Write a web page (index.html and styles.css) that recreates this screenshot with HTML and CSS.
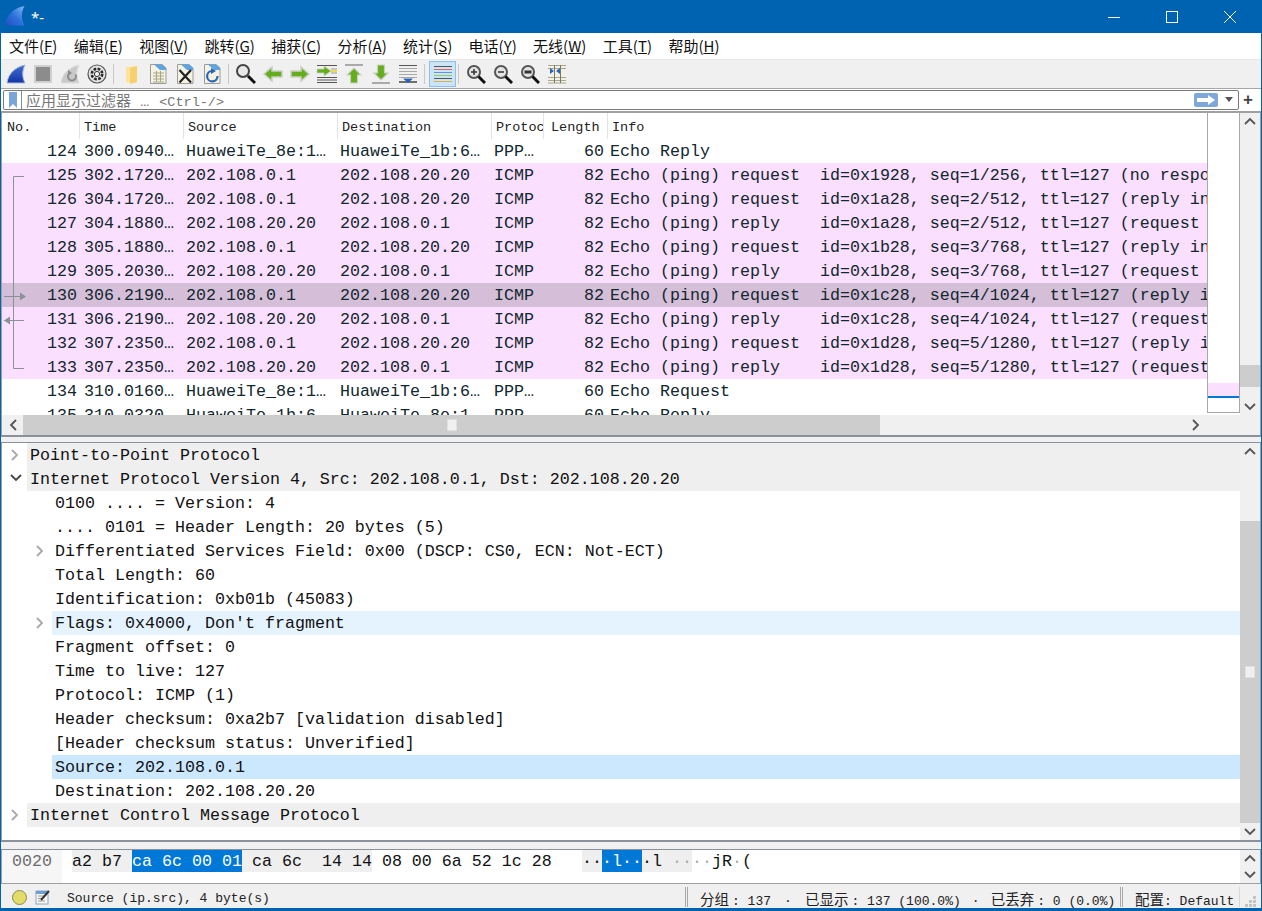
FILE: index.html
```html
<!DOCTYPE html>
<html lang="zh">
  <head>
    <meta charset="utf-8">
    <title>*-</title>
    <link rel="stylesheet" href="styles.css">
  </head>
  <body>
    <div class="window">
      <div class="titlebar">
        <svg class="logo" width="20" height="20" viewBox="0 0 20 20"><defs><linearGradient id="fin" x1="1" y1="0" x2="0" y2="1"><stop offset="0" stop-color="#7fb8f2"/><stop offset=".5" stop-color="#2f72dc"/><stop offset="1" stop-color="#1c4fc0"/></linearGradient></defs><path d="M0 19.500C1 10 8 2 19.500 0C16 6 16 13 19.500 19.500Z" fill="url(#fin)"/></svg>
        <span class="title">*-</span>
        <div class="winbtns">
          <div class="winbtn"><svg width="14" height="14" viewBox="0 0 14 14"><path d="M1 7.500H13" stroke="#fff"/></svg></div>
          <div class="winbtn"><svg width="14" height="14" viewBox="0 0 14 14"><rect x="1.500" y="1.500" width="11" height="11" fill="none" stroke="#fff"/></svg></div>
          <div class="winbtn"><svg width="14" height="14" viewBox="0 0 14 14"><path d="M1 1L13 13M13 1L1 13" stroke="#fff"/></svg></div>
        </div>
      </div>

      <div class="menubar">
        <span>文件(<u>F</u>)</span><span>编辑(<u>E</u>)</span><span>视图(<u>V</u>)</span><span>跳转(<u>G</u>)</span><span>捕获(<u>C</u>)</span><span>分析(<u>A</u>)</span><span>统计(<u>S</u>)</span><span>电话(<u>Y</u>)</span><span>无线(<u>W</u>)</span><span>工具(<u>T</u>)</span><span>帮助(<u>H</u>)</span>
      </div>

      <div class="toolbar">
        <div class="tool"><svg width="22" height="22" viewBox="0 0 22 22"><defs><linearGradient id="fin2" x1="0" y1="0" x2="0" y2="1"><stop offset="0" stop-color="#3f6fd0"/><stop offset="1" stop-color="#1435a8"/></linearGradient></defs><path d="M2 20C3 11 10 4 20 2C17 8 17 14 20 20Z" fill="url(#fin2)" stroke="#a9b9d9"/></svg></div>
        <div class="tool"><svg width="20" height="20" viewBox="0 0 20 20"><rect x="2" y="2" width="16" height="16" fill="#8c8c8c" stroke="#d0d0d0" stroke-width="2"/></svg></div>
        <div class="tool"><svg width="22" height="22" viewBox="0 0 22 22"><path d="M2 20C3 11 10 4 20 2C17 8 17 14 20 20Z" fill="#c9c9c9" stroke="#dedede"/><path d="M16.500 11.500A4 4 0 1 1 11 10" fill="none" stroke="#8d8d8d" stroke-width="2"/><path d="M9 7L13 10L9 13Z" fill="#8d8d8d"/></svg></div>
        <div class="tool"><svg width="20" height="20" viewBox="0 0 20 20"><circle cx="10" cy="10" r="9" fill="#e4e4e4" stroke="#555" stroke-width="1.200"/><circle cx="10" cy="10" r="5.200" fill="none" stroke="#2b2b2b" stroke-width="2.600" stroke-dasharray="2.700 1.380"/><circle cx="10" cy="10" r="2.600" fill="#f2f2f2" stroke="#333"/></svg></div>
        <div class="sep"></div>
        <div class="tool"><svg width="20" height="22" viewBox="0 0 20 22"><path d="M5 4L16 3V19L10 20L5 19Z" fill="#fde39c"/><path d="M9 5L16 3V19L9 21Z" fill="#f7cf6e"/></svg></div>
        <div class="tool"><svg width="20" height="22" viewBox="0 0 20 22"><path d="M2.500 1.500H14L18 5V20.500H2.500Z" fill="#f4f2e0" stroke="#9c9c9c"/><path d="M6 1.500H14L18 5V7H12Z" fill="#5da5e2"/><path d="M5 10H16M5 13H16M5 16H16M5 19H16M8.500 8V19M12.500 8V19" stroke="#a8a58e"/></svg></div>
        <div class="tool"><svg width="20" height="22" viewBox="0 0 20 22"><path d="M2.500 1.500H14L18 5V20.500H2.500Z" fill="#f4f2e0" stroke="#9c9c9c"/><path d="M6 1.500H14L18 5V7H12Z" fill="#5da5e2"/><path d="M4.500 7L16 19.500M16 7L4.500 19.500" stroke="#222" stroke-width="2.200"/></svg></div>
        <div class="tool"><svg width="20" height="22" viewBox="0 0 20 22"><path d="M2.500 1.500H14L18 5V20.500H2.500Z" fill="#f4f2e0" stroke="#9c9c9c"/><path d="M6 1.500H14L18 5V7H12Z" fill="#5da5e2"/><path d="M15.500 13A5.200 5.200 0 1 1 10 8" fill="none" stroke="#2a63b8" stroke-width="2.200"/><path d="M9 5L14 8L9 11Z" fill="#2a63b8"/></svg></div>
        <div class="sep"></div>
        <div class="tool"><svg width="22" height="22" viewBox="0 0 22 22"><circle cx="8" cy="8" r="6" fill="#e8e8e8" stroke="#444" stroke-width="2"/><path d="M13 13L20 20" stroke="#111" stroke-width="3"/></svg></div>
        <div class="tool"><svg width="22" height="18" viewBox="0 0 22 18"><path d="M2 9L10 2V6H20V12H10V16Z" fill="#64ae1e" stroke="#cbcfc2" stroke-width="1.500"/></svg></div>
        <div class="tool"><svg width="22" height="18" viewBox="0 0 22 18"><path d="M20 9L12 2V6H2V12H12V16Z" fill="#64ae1e" stroke="#cbcfc2" stroke-width="1.500"/></svg></div>
        <div class="tool"><svg width="22" height="20" viewBox="0 0 22 20"><path d="M1 1.500H21M1 13.500H21M1 16H21M1 18.500H21" stroke="#555" stroke-width="1.200"/><path d="M15 5H21M15 9H21" stroke="#999" stroke-width="1.200"/><path d="M15 6H21V8H15Z" fill="#f3d84a"/><path d="M1 5H8V2L15 7L8 12V9H1Z" fill="#64ae1e" stroke="#cbcfc2" stroke-width=".8"/></svg></div>
        <div class="tool"><svg width="20" height="22" viewBox="0 0 20 22"><path d="M1 2H19" stroke="#aaa" stroke-width="2"/><path d="M10 5L17 12H13.500V20H6.500V12H3Z" fill="#64ae1e" stroke="#cbcfc2" stroke-width="1.200"/></svg></div>
        <div class="tool"><svg width="20" height="22" viewBox="0 0 20 22"><path d="M1 20H19" stroke="#aaa" stroke-width="2"/><path d="M10 17L17 10H13.500V2H6.500V10H3Z" fill="#64ae1e" stroke="#cbcfc2" stroke-width="1.200"/></svg></div>
        <div class="tool"><svg width="20" height="20" viewBox="0 0 20 20"><path d="M1 1.500H19" stroke="#555"/><path d="M1 4.500H19M1 7.500H19M1 10.500H19M1 13.500H19" stroke="#a8a8a8"/><path d="M1 18H19" stroke="#444" stroke-width="1.500"/><path d="M5 14.500H15L10 19Z" fill="#2a63b8"/></svg></div>
        <div class="sep"></div>
        <div class="tool on"><svg width="18" height="20" viewBox="0 0 18 20"><path d="M0 2.500H18" stroke="#555"/><path d="M0 5.500H18" stroke="#e0675a"/><path d="M0 8.500H18" stroke="#6a8fd8"/><path d="M0 11.500H18" stroke="#8fcf5a"/><path d="M0 14.500H18" stroke="#555"/><path d="M0 17.500H18" stroke="#e0b040"/></svg></div>
        <div class="sep"></div>
        <div class="tool"><svg width="20" height="20" viewBox="0 0 20 20"><circle cx="8" cy="8" r="6" fill="#e4e4e4" stroke="#555" stroke-width="2"/><path d="M5 8H11M8 5V11" stroke="#333" stroke-width="1.500"/><path d="M12.500 12.500L19 19" stroke="#111" stroke-width="3"/></svg></div>
        <div class="tool"><svg width="20" height="20" viewBox="0 0 20 20"><circle cx="8" cy="8" r="6" fill="#e4e4e4" stroke="#555" stroke-width="2"/><path d="M5 8H11" stroke="#333" stroke-width="1.500"/><path d="M12.500 12.500L19 19" stroke="#111" stroke-width="3"/></svg></div>
        <div class="tool"><svg width="20" height="20" viewBox="0 0 20 20"><circle cx="8" cy="8" r="6" fill="#e4e4e4" stroke="#555" stroke-width="2"/><path d="M4.500 8H11.500" stroke="#333" stroke-width="3"/><path d="M12.500 12.500L19 19" stroke="#111" stroke-width="3"/></svg></div>
        <div class="tool"><svg width="20" height="20" viewBox="0 0 20 20"><rect x="1" y="1" width="18" height="18" fill="#f3f2e6"/><path d="M1 1.500H19M1 4.500H19M1 13.500H19M1 16.500H19M1 19H19" stroke="#a8a58e"/><path d="M7.500 1V19M13.500 1V19" stroke="#77776a"/><path d="M3 4L7 7L3 10ZM9 7L13 4V10Z" fill="#2a63b8"/></svg></div>
      </div>

      <div class="filterbar">
        <div class="filterbox">
          <div class="bookmark"><svg width="10" height="16" viewBox="0 0 10 16"><path d="M1 0H9V16L5 12L1 16Z" fill="#7ba4d9"/></svg></div>
          <span class="placeholder"><span class="hint-cjk">应用显示过滤器</span> <span class="hint-dots">…</span> &lt;Ctrl-/&gt;</span>
          <div class="applybtn"><svg width="18" height="10" viewBox="0 0 18 10"><path d="M0 3H11V0L18 5L11 10V7H0Z" fill="#fff"/></svg></div>
          <div class="dropbtn"></div>
        </div>
        <div class="plusbtn">+</div>
      </div>

      <div class="pane packets">
        <div class="pane-main">
          <div class="list">
            <div class="listhead">
              <span>No.</span><span>Time</span><span>Source</span><span>Destination</span><span>Protoc</span><span class="len">Length</span><span>Info</span>
            </div>
            <div class="row"><span class="r">124</span><span>300.0940…</span><span>HuaweiTe_8e:1…</span><span>HuaweiTe_1b:6…</span><span>PPP…</span><span class="r">60</span><span>Echo Reply</span></div>
            <div class="row icmp"><span class="r">125</span><span>302.1720…</span><span>202.108.0.1</span><span>202.108.20.20</span><span>ICMP</span><span class="r">82</span><span>Echo (ping) request  id=0x1928, seq=1/256, ttl=127 (no response found!)</span></div>
            <div class="row icmp"><span class="r">126</span><span>304.1720…</span><span>202.108.0.1</span><span>202.108.20.20</span><span>ICMP</span><span class="r">82</span><span>Echo (ping) request  id=0x1a28, seq=2/512, ttl=127 (reply in 127)</span></div>
            <div class="row icmp"><span class="r">127</span><span>304.1880…</span><span>202.108.20.20</span><span>202.108.0.1</span><span>ICMP</span><span class="r">82</span><span>Echo (ping) reply    id=0x1a28, seq=2/512, ttl=127 (request in 126)</span></div>
            <div class="row icmp"><span class="r">128</span><span>305.1880…</span><span>202.108.0.1</span><span>202.108.20.20</span><span>ICMP</span><span class="r">82</span><span>Echo (ping) request  id=0x1b28, seq=3/768, ttl=127 (reply in 129)</span></div>
            <div class="row icmp"><span class="r">129</span><span>305.2030…</span><span>202.108.20.20</span><span>202.108.0.1</span><span>ICMP</span><span class="r">82</span><span>Echo (ping) reply    id=0x1b28, seq=3/768, ttl=127 (request in 128)</span></div>
            <div class="row icmp sel"><span class="r">130</span><span>306.2190…</span><span>202.108.0.1</span><span>202.108.20.20</span><span>ICMP</span><span class="r">82</span><span>Echo (ping) request  id=0x1c28, seq=4/1024, ttl=127 (reply in 131)</span></div>
            <div class="row icmp"><span class="r">131</span><span>306.2190…</span><span>202.108.20.20</span><span>202.108.0.1</span><span>ICMP</span><span class="r">82</span><span>Echo (ping) reply    id=0x1c28, seq=4/1024, ttl=127 (request in 130)</span></div>
            <div class="row icmp"><span class="r">132</span><span>307.2350…</span><span>202.108.0.1</span><span>202.108.20.20</span><span>ICMP</span><span class="r">82</span><span>Echo (ping) request  id=0x1d28, seq=5/1280, ttl=127 (reply in 133)</span></div>
            <div class="row icmp"><span class="r">133</span><span>307.2350…</span><span>202.108.20.20</span><span>202.108.0.1</span><span>ICMP</span><span class="r">82</span><span>Echo (ping) reply    id=0x1d28, seq=5/1280, ttl=127 (request in 132)</span></div>
            <div class="row"><span class="r">134</span><span>310.0160…</span><span>HuaweiTe_8e:1…</span><span>HuaweiTe_1b:6…</span><span>PPP…</span><span class="r">60</span><span>Echo Request</span></div>
            <div class="row"><span class="r">135</span><span>310.0320…</span><span>HuaweiTe_1b:6…</span><span>HuaweiTe_8e:1…</span><span>PPP…</span><span class="r">60</span><span>Echo Reply</span></div>
            <svg class="related" width="30" height="216" viewBox="0 0 30 216"><g fill="none" stroke="#8a9296"><path d="M22 1.500H11.500V193.500H22"/><path d="M2 121.500H19M2 145.500H22"/></g><path d="M18 117.500L24 121.500L18 125.500ZM2 145.500L8 141.500V149.500Z" fill="#8a9296"/></svg>
          </div>
          <div class="minimap">
            <div class="map-spacer"></div>
            <div class="map-pink"></div>
            <div class="map-line"></div>
          </div>
          <div class="vscroll">
            <div class="arrow">
              <svg width="12" height="8" viewBox="0 0 12 8"><path d="M1 7L6 2L11 7" fill="none" stroke="#555" stroke-width="1.800"/></svg>
            </div>
            <div class="track"><div class="thumb packets-thumb"></div></div>
            <div class="arrow">
              <svg width="12" height="8" viewBox="0 0 12 8"><path d="M1 1L6 6L11 1" fill="none" stroke="#555" stroke-width="1.800"/></svg>
            </div>
          </div>
        </div>
        <div class="hscroll">
          <div class="arrow"><svg width="8" height="12" viewBox="0 0 8 12"><path d="M7 1L2 6L7 11" fill="none" stroke="#555" stroke-width="1.800"/></svg></div>
          <div class="hthumb"><span class="grip"></span></div>
          <div class="htrack"></div>
          <div class="arrow"><svg width="8" height="12" viewBox="0 0 8 12"><path d="M1 1L6 6L1 11" fill="none" stroke="#555" stroke-width="1.800"/></svg></div>
          <div class="hrest"></div>
        </div>
      </div>

      <div class="splitter"></div>

      <div class="pane details">
        <div class="tree">
          <div class="node head"><svg class="tw" width="10" height="12" viewBox="0 0 10 12"><path d="M2 1L7 6L2 11" fill="none" stroke="#a8a8a8" stroke-width="1.800"/></svg><span>Point-to-Point Protocol</span></div>
          <div class="node head"><svg class="tw" width="12" height="10" viewBox="0 0 12 10"><path d="M1 2L6 7L11 2" fill="none" stroke="#444" stroke-width="1.800"/></svg><span>Internet Protocol Version 4, Src: 202.108.0.1, Dst: 202.108.20.20</span></div>
          <div class="node sub"><span>0100 .... = Version: 4</span></div>
          <div class="node sub"><span>.... 0101 = Header Length: 20 bytes (5)</span></div>
          <div class="node sub"><svg class="tw" width="10" height="12" viewBox="0 0 10 12"><path d="M2 1L7 6L2 11" fill="none" stroke="#a8a8a8" stroke-width="1.800"/></svg><span>Differentiated Services Field: 0x00 (DSCP: CS0, ECN: Not-ECT)</span></div>
          <div class="node sub"><span>Total Length: 60</span></div>
          <div class="node sub"><span>Identification: 0xb01b (45083)</span></div>
          <div class="node sub hover"><svg class="tw" width="10" height="12" viewBox="0 0 10 12"><path d="M2 1L7 6L2 11" fill="none" stroke="#a8a8a8" stroke-width="1.800"/></svg><span>Flags: 0x4000, Don't fragment</span></div>
          <div class="node sub"><span>Fragment offset: 0</span></div>
          <div class="node sub"><span>Time to live: 127</span></div>
          <div class="node sub"><span>Protocol: ICMP (1)</span></div>
          <div class="node sub"><span>Header checksum: 0xa2b7 [validation disabled]</span></div>
          <div class="node sub"><span>[Header checksum status: Unverified]</span></div>
          <div class="node sub picked"><span>Source: 202.108.0.1</span></div>
          <div class="node sub"><span>Destination: 202.108.20.20</span></div>
          <div class="node head"><svg class="tw" width="10" height="12" viewBox="0 0 10 12"><path d="M2 1L7 6L2 11" fill="none" stroke="#a8a8a8" stroke-width="1.800"/></svg><span>Internet Control Message Protocol</span></div>
        </div>
        <div class="vscroll">
          <div class="arrow">
            <svg width="12" height="8" viewBox="0 0 12 8"><path d="M1 7L6 2L11 7" fill="none" stroke="#555" stroke-width="1.800"/></svg>
          </div>
          <div class="track"><div class="thumb details-thumb"><span class="grip"></span></div></div>
          <div class="arrow">
            <svg width="12" height="8" viewBox="0 0 12 8"><path d="M1 1L6 6L11 1" fill="none" stroke="#555" stroke-width="1.800"/></svg>
          </div>
        </div>
      </div>

      <div class="splitter wide"></div>

      <div class="pane bytes">
        <div class="hexpane">
          <div class="offset">0020</div>
          <div class="hexline"><span class="field">a2 b7 <span class="pick">ca 6c 00 01</span> ca 6c  14 14</span> 08 00 6a 52 1c 28</div>
          <div class="asciiline"><span class="field">··<span class="pick">·l··</span>·l <span class="dim">··</span></span><span class="dim">··</span>jR<span class="dim">·</span>(</div>
        </div>
        <div class="vscroll">
          <div class="arrow">
            <svg width="12" height="8" viewBox="0 0 12 8"><path d="M1 7L6 2L11 7" fill="none" stroke="#555" stroke-width="1.800"/></svg>
          </div>
          <div class="arrow">
            <svg width="12" height="8" viewBox="0 0 12 8"><path d="M1 1L6 6L11 1" fill="none" stroke="#555" stroke-width="1.800"/></svg>
          </div>
        </div>
      </div>

      <div class="statusbar">
        <span class="led"></span>
        <svg class="note" width="16" height="16" viewBox="0 0 16 16"><rect x="1" y="2" width="12" height="13" fill="#f8f8f0" stroke="#8aa8c8"/><path d="M1 2H13V5H1Z" fill="#6f9fd0"/><path d="M3 7H9M3 9.500H8M3 12H10" stroke="#999"/><path d="M6 11L14 2" stroke="#333" stroke-width="2"/></svg>
        <span class="status-msg">Source (ip.src), 4 byte(s)</span>
        <div class="status-sep"></div>
        <span class="status-stats"><span class="cjk wide-colon">分组</span>: 137<span class="dot first">·</span><span class="cjk wide-colon">已显示</span>: 137 (100.0%)<span class="dot">·</span><span class="cjk wide-colon">已丢弃</span>: 0 (0.0%)</span>
        <div class="status-sep"></div>
        <span class="status-profile"><span class="cjk">配置</span>: Default</span>
        <div class="status-end"></div>
        <svg class="sizegrip" width="11" height="11" viewBox="0 0 11 11"><path d="M8 0h3v3H8zM4 4h3v3H4zM8 4h3v3H8zM0 8h3v3H0zM4 8h3v3H4zM8 8h3v3H8z" fill="#c4c4c4"/></svg>
      </div>
    </div>
  </body>
</html>
```

FILE: styles.css
```css
html, body {
    margin: 0;
    height: 100%;
    overflow: hidden;
    background-color: #f0f0f0;
}
.window {
    box-sizing: border-box;
    width: 1262px;
    height: 911px;
    display: flex;
    flex-direction: column;
    border-left: 1px solid #0063b1;
    border-right: 1px solid #0063b1;
    border-bottom: 3px solid #0063b1;
    font-family: "Liberation Mono", "Noto Sans CJK SC", monospace;
    color: #111;
}
.titlebar {
    height: 33px;
    display: flex;
    align-items: center;
    background-color: #0063b1;
    color: #fff;
}
.logo {
    margin-left: 4px;
    margin-top: -2px;
}
.title {
    margin-left: 6px;
    font: 15px "Noto Sans", sans-serif;
}
.winbtns {
    margin-left: auto;
    margin-right: 2px;
    display: flex;
}
.winbtn {
    width: 58px;
    height: 33px;
    display: flex;
    justify-content: center;
    align-items: center;
}
.menubar {
    height: 26px;
    display: flex;
    align-items: center;
    gap: 16.400px;
    padding-left: 8px;
    background-color: #fff;
    font: 15px "Noto Sans CJK SC", sans-serif;
    color: #111;
}
.toolbar {
    height: 30px;
    box-sizing: border-box;
    display: flex;
    align-items: center;
    padding-left: 1px;
    background-color: #f0f0f0;
    border-top: 1px solid #e8e8e8;
    border-bottom: 1px solid #a6a6a6;
}
.tool {
    width: 27px;
    height: 26px;
    box-sizing: border-box;
    display: flex;
    justify-content: center;
    align-items: center;
}
.tool.on {
    margin: 0 -1px 0 1px;
    background-color: #cce4f7;
    border: 1px solid #8cc0ea;
}
.sep {
    width: 1px;
    height: 20px;
    margin: 0 3px;
    background-color: #c8c8c8;
}
.filterbar {
    height: 24px;
    box-sizing: border-box;
    display: flex;
    align-items: center;
    background-color: #fff;
    border-bottom: 2px solid #a0a0a0;
}
.filterbox {
    box-sizing: border-box;
    width: 1236px;
    height: 20px;
    margin-left: 2px;
    display: flex;
    align-items: center;
    border: 1px solid #7a7a7a;
    border-radius: 2px;
}
.bookmark {
    width: 17px;
    height: 18px;
    box-sizing: content-box;
    display: flex;
    justify-content: center;
    align-items: center;
    border-right: 1px solid #8a8a8a;
}
.placeholder {
    margin-left: 4px;
    white-space: pre;
    font-size: 13.500px;
    color: #767676;
}
.hint-cjk {
    font: 15px "Noto Sans CJK SC", sans-serif;
}
.hint-dots {
    margin: 0 2px 0 1px;
    font-size: 15px;
}
.applybtn {
    width: 24px;
    height: 14px;
    margin-left: auto;
    display: flex;
    justify-content: center;
    align-items: center;
    background-color: #7fa8d8;
    border-radius: 2px;
}
.dropbtn {
    width: 0;
    height: 0;
    margin: 0 5px 0 7px;
    border-left: 4px solid transparent;
    border-right: 4px solid transparent;
    border-top: 5px solid #555;
}
.plusbtn {
    flex: 1;
    padding-right: 4px;
    text-align: center;
    font: bold 17px "Liberation Sans", sans-serif;
    color: #444;
}
.pane {
    background-color: #fff;
    border-left: 1px solid #a0a0a0;
    border-right: 1px solid #a0a0a0;
}
.packets {
    height: 322px;
    display: flex;
    flex-direction: column;
}
.pane-main {
    height: 302px;
    display: flex;
}
.list {
    position: relative;
    width: 1205px;
    overflow: hidden;
}
.listhead,
.row {
    display: grid;
    grid-template-columns: 77px 104px 154px 154px 52px 64px 1fr;
    white-space: pre;
}
.listhead {
    height: 26px;
    align-items: center;
    font-size: 13.500px;
    color: #222;
}
.listhead span {
    height: 26px;
    line-height: 29px;
    padding-left: 4px;
    overflow: hidden;
    border-left: 1px solid #e4e4e4;
    box-sizing: border-box;
}
.listhead span:first-child {
    padding-left: 5px;
    border-left: none;
}
.listhead .len {
    padding-left: 7px;
}
.row {
    height: 24px;
    line-height: 24px;
    font-size: 16.670px;
    color: #12272e;
}
.row span {
    box-sizing: border-box;
    padding-top: 1px;
    padding-left: 3px;
    overflow: hidden;
}
.row span:nth-child(2) {
    padding-left: 5px;
}
.row .r {
    padding-right: 3px;
    text-align: right;
}
.row span:first-child {
    padding-right: 2px;
}
.icmp {
    background-color: #fbdfff;
}
.sel {
    background-color: #d5bfd8;
}
.related {
    position: absolute;
    left: 0;
    top: 62px;
}
.minimap {
    width: 33px;
    height: 300px;
    box-sizing: border-box;
    border-left: 1px solid #a8a8a8;
    border-right: 1px solid #a8a8a8;
    border-bottom: 1px solid #a8a8a8;
    display: flex;
    flex-direction: column;
}
.map-spacer {
    height: 270px;
}
.map-pink {
    height: 13px;
    background-color: #fbdfff;
}
.map-line {
    height: 2px;
    background-color: #0078d7;
}
.vscroll {
    width: 20px;
    display: flex;
    flex-direction: column;
    justify-content: space-between;
    background-color: #f0f0f0;
}
.arrow {
    flex: none;
    width: 20px;
    height: 16px;
    display: flex;
    justify-content: center;
    align-items: center;
}
.track {
    flex: 1;
    position: relative;
}
.thumb {
    position: absolute;
    left: 0;
    width: 100%;
    background-color: #cdcdcd;
}
.packets-thumb {
    top: 236px;
    height: 22px;
}
.details-thumb {
    top: 62px;
    height: 302px;
    display: flex;
    justify-content: center;
    align-items: center;
}
.grip {
    width: 10px;
    height: 12px;
    background-color: #f0f0f0;
    border: 1px solid #e0e0e0;
    box-sizing: border-box;
}
.hscroll {
    height: 20px;
    display: flex;
    background-color: #f0f0f0;
}
.hscroll .arrow {
    height: 20px;
    width: 21px;
}
.hthumb {
    width: 857px;
    display: flex;
    justify-content: center;
    align-items: center;
    background-color: #cdcdcd;
}
.htrack {
    width: 305px;
}
.hrest {
    flex: 1;
}
.splitter {
    height: 8px;
    box-sizing: border-box;
    background-color: #f0f0f0;
    border-top: 2px solid #8a919a;
    border-bottom: 1px solid #8a919a;
}
.splitter.wide {
    height: 10px;
}
.details {
    height: 398px;
    display: flex;
}
.tree {
    width: 1238px;
}
.node {
    position: relative;
    height: 24px;
    line-height: 24px;
    white-space: pre;
    font-size: 16.670px;
    color: #111;
}
.node span {
    display: block;
    box-sizing: border-box;
    height: 24px;
    padding-top: 1px;
}
.head {
    margin-left: 25px;
    padding-left: 3px;
    background-color: #efefef;
}
.sub {
    margin-left: 50px;
    padding-left: 3px;
}
.hover {
    background-color: #e5f3ff;
}
.picked {
    background-color: #cce8ff;
}
.tw {
    position: absolute;
    top: 6px;
    left: -17px;
}
.bytes {
    height: 33px;
    display: flex;
}
.bytes .vscroll .arrow {
    height: 16px;
}
.hexpane {
    width: 1238px;
    display: flex;
    font-size: 16.670px;
    white-space: pre;
    line-height: 24px;
}
.offset {
    width: 60px;
    padding-left: 10px;
    box-sizing: border-box;
    background-color: #f6f6f6;
    color: #6d6d6d;
}
.hexline {
    margin-left: 10px;
    width: 480px;
    height: 22px;
}
.asciiline {
    margin-left: 30px;
    height: 22px;
}
.field {
    display: inline-block;
    height: 22px;
    vertical-align: top;
    background-color: #efefef;
}
.pick {
    display: inline-block;
    height: 22px;
    vertical-align: top;
    background-color: #0078d7;
    color: #fff;
}
.dim {
    color: #aaa;
}
.statusbar {
    height: 25px;
    box-sizing: border-box;
    display: flex;
    align-items: center;
    padding-top: 2px;
    background-color: #f0f0f0;
    border-top: 1px solid #a0a0a0;
    font-size: 13px;
    color: #222;
    white-space: pre;
}
.led {
    width: 13px;
    height: 13px;
    margin-left: 11px;
    border-radius: 50%;
    background-color: #e4dc68;
    border: 1px solid #8a8a50;
}
.note {
    margin-left: 8px;
}
.status-msg {
    margin-left: 16px;
    width: 618px;
    padding-top: 2px;
}
.status-sep {
    width: 3px;
    height: 20px;
    box-sizing: border-box;
    border-left: 1px solid #a8a8a8;
    border-right: 1px solid #a8a8a8;
}
.status-stats {
    margin-left: 12px;
    width: 420px;
    padding-top: 2px;
}
.dot {
    display: inline-block;
    width: 30px;
    text-align: center;
}
.dot.first {
    width: 34px;
}
.status-profile {
    margin-left: 12px;
    width: 104px;
    padding-top: 2px;
}
.status-end {
    width: 1px;
    height: 20px;
    background-color: #d8d8d8;
}
.cjk {
    font: 14.500px "Noto Sans CJK SC", sans-serif;
}
.wide-colon {
    margin-right: 3px;
}
.sizegrip {
    margin-left: 5px;
    margin-top: 9px;
}
```
